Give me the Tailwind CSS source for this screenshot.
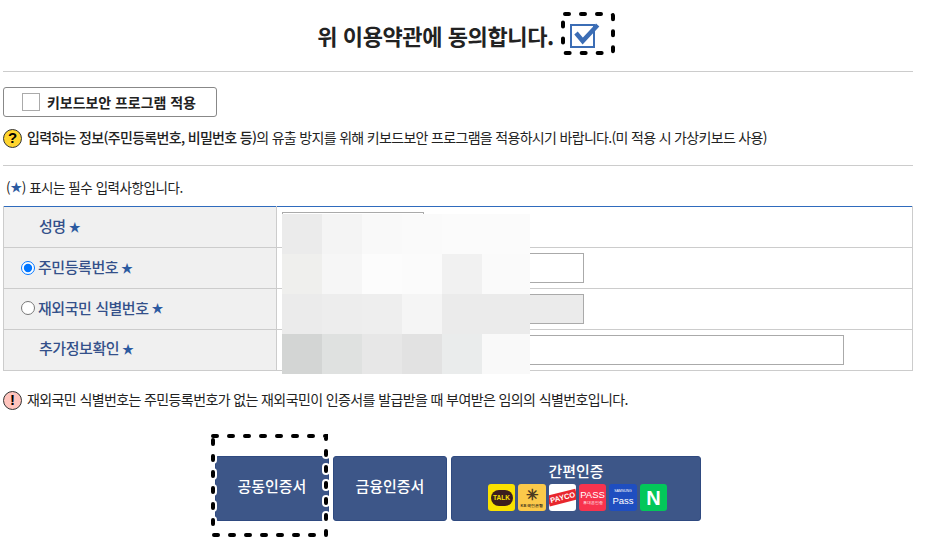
<!DOCTYPE html>
<html lang="ko">
<head>
<meta charset="utf-8">
<script src="https://cdn.jsdelivr.net/npm/@tailwindcss/browser@4"></script>
</head>
<body class="bg-white overflow-hidden">
<div class="relative w-[936px] h-[538px] overflow-hidden pl-[3px] pr-[23px] font-['Noto_Sans_CJK_KR','Noto_Sans',sans-serif] text-[#222]">
  <div class="h-[72px] border-b border-[#ccc] flex items-center justify-center pl-[16px] pb-[1px]">
    <span class="text-[22px] font-bold tracking-[-0.4px] text-[#222] whitespace-nowrap">위 이용약관에 동의합니다.</span>
    <span class="relative w-[54px] h-[44px] ml-[7px] shrink-0">
      <svg width="54" height="44" viewBox="0 0 54 44" class="absolute inset-0 overflow-visible">
        <rect x="2" y="1" width="50" height="39" rx="2" fill="none" stroke="#000" stroke-width="4" stroke-linecap="round" stroke-dasharray="4 12"/>
        <rect x="10" y="12" width="23" height="22" fill="#fff" stroke="#3b6db5" stroke-width="2"/>
        <path d="M15 20 L21.7 28 L36.7 12" fill="none" stroke="#3b6db5" stroke-width="4.5"/>
      </svg>
    </span>
  </div>
  <div class="mt-[15px] w-[214px] h-[30px] border border-[#888] rounded-[3px] flex items-center pl-[18px]">
    <span class="w-[18px] h-[18px] border border-[#aaa] bg-white"></span>
    <span class="ml-[7px] text-[14px] font-bold tracking-[-0.05px] text-[#222] whitespace-nowrap">키보드보안 프로그램 적용</span>
  </div>
  <div class="mt-[10px] h-[22px] flex items-center">
    <span class="w-[19px] h-[19px] rounded-full bg-[#ffd52e] border-[1.5px] border-[#333] flex items-center justify-center text-[15px] font-black font-['Liberation_Sans'] text-black">?</span>
    <span class="ml-[5px] pb-[2px] text-[14px] tracking-[-0.68px] whitespace-nowrap text-[#222]"><span class="font-medium">입력하는 정보(주민등록번호, 비밀번호 등)</span>의 유출 방지를 위해 키보드보안 프로그램을 적용하시기 바랍니다.(미 적용 시 가상키보드 사용)</span>
  </div>
  <div class="mt-[16px] border-t border-[#ccc]"></div>
  <div class="mt-[12px] h-[18px] pl-[3px] flex items-center text-[13.5px] tracking-[-0.45px] text-[#222] whitespace-pre">(<span class="text-[#2c5aa0] text-[12px]">★</span>) 표시는 필수 입력사항입니다.</div>
  <table class="mt-[10px] w-[910px] border-collapse table-fixed border-t border-[#2f6bbd]">
    <colgroup><col class="w-[273px]"><col></colgroup>
    <tbody>
      <tr class="h-[41px]">
        <th class="border border-t-0 border-[#ccc] bg-[#f0f0f0] text-left font-medium text-[15px] tracking-[-0.45px] text-[#34508a] pl-[35px] pb-[2px]">성명<span class="text-[#2c5aa0] text-[12px] ml-[3px]">★</span></th>
        <td class="border border-t-0 border-[#ccc] pl-[5px] align-top pt-[5px]"><input class="block w-[142px] h-[30px] border border-[#aaa]"></td>
      </tr>
      <tr class="h-[41px]">
        <th class="border border-[#ccc] bg-[#f0f0f0] text-left font-medium text-[15px] tracking-[-0.45px] text-[#34508a] pl-[17px] pb-[1px]"><span class="flex items-center"><input type="radio" name="r" checked class="w-[14px] h-[14px] m-0 mr-[3px]">주민등록번호<span class="text-[#2c5aa0] text-[12px] ml-[3px]">★</span></span></th>
        <td class="border border-[#ccc] pl-[5px]"><input class="block w-[302px] h-[30px] border border-[#aaa]"></td>
      </tr>
      <tr class="h-[41px]">
        <th class="border border-[#ccc] bg-[#f0f0f0] text-left font-medium text-[15px] tracking-[-0.45px] text-[#34508a] pl-[17px] pb-[2px]"><span class="flex items-center"><input type="radio" name="r" class="w-[14px] h-[14px] m-0 mr-[3px]">재외국민 식별번호<span class="text-[#2c5aa0] text-[12px] ml-[3px]">★</span></span></th>
        <td class="border border-[#ccc] pl-[5px]"><input class="block w-[302px] h-[30px] border border-[#aaa] bg-[#ebebeb]"></td>
      </tr>
      <tr class="h-[41px]">
        <th class="border border-[#ccc] bg-[#f0f0f0] text-left font-medium text-[15px] tracking-[-0.45px] text-[#34508a] pl-[35px] pb-[3px]">추가정보확인<span class="text-[#2c5aa0] text-[12px] ml-[3px]">★</span></th>
        <td class="border border-[#ccc] pl-[5px]"><input class="block w-[562px] h-[30px] border border-[#aaa]"></td>
      </tr>
    </tbody>
  </table>
  <div class="mt-[18px] h-[22px] flex items-center">
    <span class="w-[19px] h-[19px] rounded-full bg-[#ffc4bd] border-[1.5px] border-[#333] flex items-center justify-center text-[15px] font-black font-['Liberation_Sans'] text-black">!</span>
    <span class="ml-[5px] pb-[2px] text-[14px] tracking-[-0.61px] whitespace-nowrap text-[#222]">재외국민 식별번호는 주민등록번호가 없는 재외국민이 인증서를 발급받을 때 부여받은 임의의 식별번호입니다.</span>
  </div>
  <div class="mt-[45px] ml-[212px] flex gap-[4px] h-[65px] text-white">
    <div class="w-[114px] rounded-[3px] bg-[#3d5688] border border-[#2f4a80] flex items-center justify-center pb-[4px] text-[15px] font-medium tracking-[-0.05px]">공동인증서</div>
    <div class="w-[114px] rounded-[3px] bg-[#3d5688] border border-[#2f4a80] flex items-center justify-center pb-[4px] text-[15px] font-medium tracking-[-0.05px]">금융인증서</div>
    <div class="w-[250px] rounded-[3px] bg-[#3d5688] border border-[#2f4a80] flex flex-col items-center pt-[4px]">
      <span class="text-[15px] leading-[20px] font-medium tracking-[-0.05px]">간편인증</span>
      <div class="mt-[3px] ml-[3px] flex gap-[3px] font-['Liberation_Sans']">
        <span class="w-[27px] h-[27px] rounded-[3px] bg-[#fae100] flex items-center justify-center">
          <span class="w-[22px] h-[16px] rounded-full bg-[#3c1e1e] text-[#fae100] text-[6.5px] font-bold flex items-center justify-center">TALK</span>
        </span>
        <span class="w-[28px] h-[27px] rounded-[3px] bg-[#fbc94a] flex flex-col items-center justify-center text-[#4a3a20] leading-none">
          <span class="text-[15px] leading-[15px] font-bold">✳</span>
          <span class="text-[4px] font-bold mt-[2px] whitespace-nowrap">KB 국민은행</span>
        </span>
        <span class="w-[27px] h-[27px] rounded-[3px] bg-white overflow-hidden flex items-center justify-center">
          <span class="bg-[#e8262d] text-white text-[7.5px] font-bold px-[2px] -rotate-[14deg] leading-[11px]">PAYCO</span>
        </span>
        <span class="w-[27px] h-[27px] rounded-[3px] bg-[#f8334e] text-white flex flex-col items-center justify-center leading-none">
          <span class="text-[9.5px]">PASS</span>
          <span class="text-[4px] mt-[2px] whitespace-nowrap">휴대폰인증</span>
        </span>
        <span class="w-[28px] h-[27px] rounded-[3px] bg-[#1f4ec0] text-white flex flex-col items-center justify-center leading-none">
          <span class="text-[3.5px]">SAMSUNG</span>
          <span class="text-[9.5px] mt-[2px]">Pass</span>
        </span>
        <span class="w-[27px] h-[27px] rounded-[3px] bg-[#03c75a] text-white flex items-center justify-center text-[20px] font-black">N</span>
      </div>
    </div>
  </div>

  <!-- pixelated privacy mask over the input fields -->
  <div class="absolute left-[282px] top-[214px] w-[248px] h-[160px] grid grid-cols-[40px_40px_40px_40px_40px_48px] grid-rows-[40px_40px_40px_40px]">
    <div class="bg-[#ebebeb]"></div><div class="bg-[#f4f4f4]"></div><div class="bg-[#f9f9f9]"></div><div class="bg-[#fafafa]"></div><div class="bg-[#fbfbfb]"></div><div class="bg-[#fbfbfb]"></div>
    <div class="bg-[#efefed]"></div><div class="bg-[#f6f6f6]"></div><div class="bg-[#fcfcfc]"></div><div class="bg-[#fbfbfb]"></div><div class="bg-[#f1f1f1]"></div><div class="bg-[#fafafa]"></div>
    <div class="bg-[#ebebeb]"></div><div class="bg-[#ededed]"></div><div class="bg-[#eeeeee]"></div><div class="bg-[#f5f5f5]"></div><div class="bg-[#ebebeb]"></div><div class="bg-[#ebebeb]"></div>
    <div class="bg-[#d3d5d4]"></div><div class="bg-[#dfe1e0]"></div><div class="bg-[#e7e7e7]"></div><div class="bg-[#e2e2e2]"></div><div class="bg-[#eaecec]"></div><div class="bg-[#f9f9f9]"></div>
  </div>

  <!-- dashed highlight over the first button -->
  <svg class="absolute left-[208px] top-[431px]" width="124" height="108" viewBox="0 0 124 108">
    <rect x="5" y="5" width="113" height="99" fill="none" stroke="#fff" stroke-width="8" stroke-linecap="round" stroke-dasharray="4 12"/>
    <rect x="5" y="5" width="113" height="99" fill="none" stroke="#000" stroke-width="4" stroke-linecap="round" stroke-dasharray="4 12"/>
  </svg>
</div>
</body>
</html>
